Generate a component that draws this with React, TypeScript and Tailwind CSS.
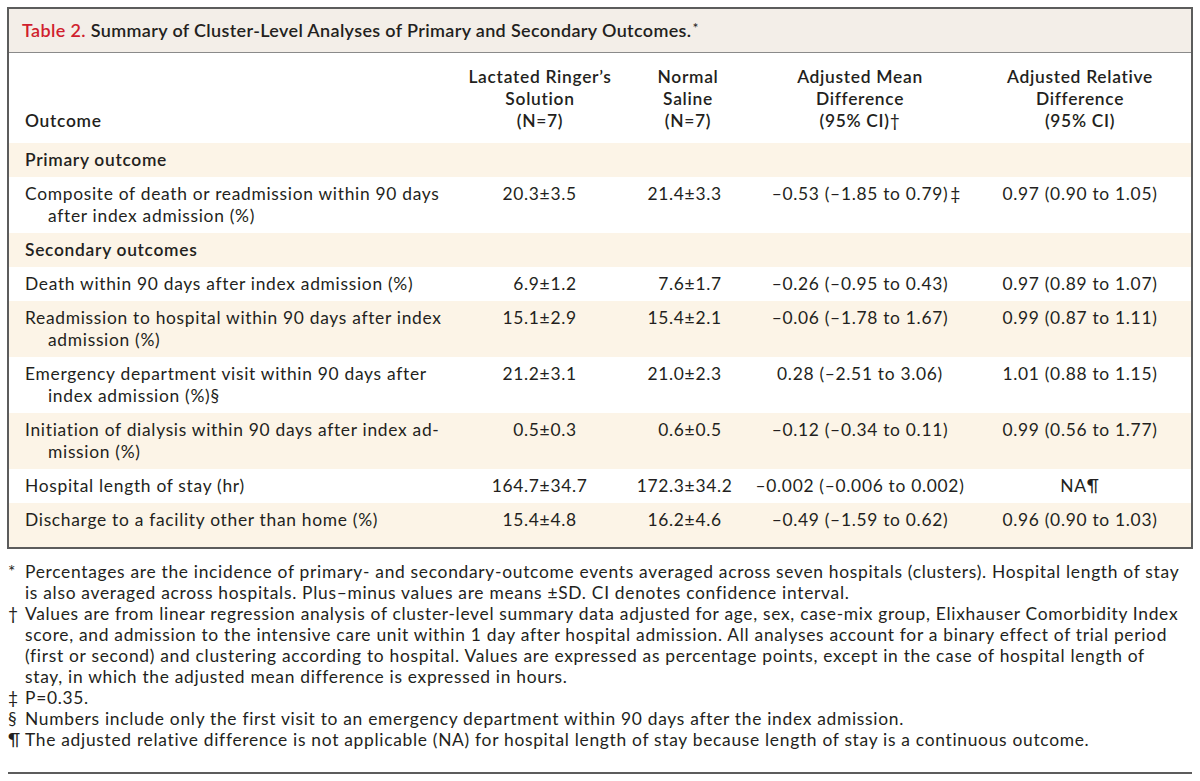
const cream = "bg-[#fcf4e7]";

type Row =
  | { kind: "section"; label: string }
  | {
      kind: "data";
      label: string[];
      lr: [string, string];
      ns: [string, string];
      amd: string;
      mark?: string;
      ard: string;
      shaded: boolean;
    };

const rows: Row[] = [
  { kind: "section", label: "Primary outcome" },
  {
    kind: "data",
    label: ["Composite of death or readmission within 90 days", "after index admission (%)"],
    lr: ["20.3", "3.5"],
    ns: ["21.4", "3.3"],
    amd: "–0.53 (–1.85 to 0.79)",
    mark: "‡",
    ard: "0.97 (0.90 to 1.05)",
    shaded: false,
  },
  { kind: "section", label: "Secondary outcomes" },
  {
    kind: "data",
    label: ["Death within 90 days after index admission (%)"],
    lr: ["6.9", "1.2"],
    ns: ["7.6", "1.7"],
    amd: "–0.26 (–0.95 to 0.43)",
    ard: "0.97 (0.89 to 1.07)",
    shaded: false,
  },
  {
    kind: "data",
    label: ["Readmission to hospital within 90 days after index", "admission (%)"],
    lr: ["15.1", "2.9"],
    ns: ["15.4", "2.1"],
    amd: "–0.06 (–1.78 to 1.67)",
    ard: "0.99 (0.87 to 1.11)",
    shaded: true,
  },
  {
    kind: "data",
    label: ["Emergency department visit within 90 days after", "index admission (%)§"],
    lr: ["21.2", "3.1"],
    ns: ["21.0", "2.3"],
    amd: "0.28 (–2.51 to 3.06)",
    ard: "1.01 (0.88 to 1.15)",
    shaded: false,
  },
  {
    kind: "data",
    label: ["Initiation of dialysis within 90 days after index ad-", "mission (%)"],
    lr: ["0.5", "0.3"],
    ns: ["0.6", "0.5"],
    amd: "–0.12 (–0.34 to 0.11)",
    ard: "0.99 (0.56 to 1.77)",
    shaded: true,
  },
  {
    kind: "data",
    label: ["Hospital length of stay (hr)"],
    lr: ["164.7", "34.7"],
    ns: ["172.3", "34.2"],
    amd: "–0.002 (–0.006 to 0.002)",
    ard: "NA¶",
    shaded: false,
  },
  {
    kind: "data",
    label: ["Discharge to a facility other than home (%)"],
    lr: ["15.4", "4.8"],
    ns: ["16.2", "4.6"],
    amd: "–0.49 (–1.59 to 0.62)",
    ard: "0.96 (0.90 to 1.03)",
    shaded: true,
  },
];

const notes = [
  {
    mark: "*",
    lines: [
      "Percentages are the incidence of primary- and secondary-outcome events averaged across seven hospitals (clusters). Hospital length of stay",
      "is also averaged across hospitals. Plus–minus values are means ±SD. CI denotes confidence interval.",
    ],
  },
  {
    mark: "†",
    lines: [
      "Values are from linear regression analysis of cluster-level summary data adjusted for age, sex, case-mix group, Elixhauser Comorbidity Index",
      "score, and admission to the intensive care unit within 1 day after hospital admission. All analyses account for a binary effect of trial period",
      "(first or second) and clustering according to hospital. Values are expressed as percentage points, except in the case of hospital length of",
      "stay, in which the adjusted mean difference is expressed in hours.",
    ],
  },
  { mark: "‡", lines: ["P=0.35."] },
  { mark: "§", lines: ["Numbers include only the first visit to an emergency department within 90 days after the index admission."] },
  {
    mark: "¶",
    lines: ["The adjusted relative difference is not applicable (NA) for hospital length of stay because length of stay is a continuous outcome."],
  },
];

const cols = "grid grid-cols-[446px_170px_126px_218px_222px]";

function PlusMinus({ v, shift }: { v: [string, string]; shift: string }) {
  return (
    <div className={`flex justify-center ${shift}`}>
      <span className="w-[56px] text-right">{v[0]}</span>
      <span>±</span>
      <span className="w-[56px] text-left">{v[1]}</span>
    </div>
  );
}

export default function App() {
  return (
    <div className="w-[1200px] h-[781px] bg-white text-[#231f20] font-['Lato',sans-serif] pt-[7px] tracking-[0.7px]">
      <div className="ml-[7px] w-[1186px] border-2 border-[#5c5c5c]">
        <div className="h-[44px] bg-[#f3eee8] border-b border-[#8a8a8a] flex items-center pl-[13px] text-[18px] font-semibold tracking-[0.35px]">
          <span className="text-[#d01f2e]">Table 2.</span>
          <span className="ml-[5px]">Summary of Cluster-Level Analyses of Primary and Secondary Outcomes.</span>
          <span className="ml-[1px] text-[14px] -mt-[6px] font-normal">*</span>
        </div>

        <div className={`${cols} items-end pt-[13px] pb-[11px] text-[17.4px] leading-[22px] font-semibold`}>
          <div className="pl-[16px]">Outcome</div>
          <div className="text-center">
            Lactated Ringer’s
            <br />
            Solution
            <br />
            (N=7)
          </div>
          <div className="text-center">
            Normal
            <br />
            Saline
            <br />
            (N=7)
          </div>
          <div className="text-center">
            Adjusted Mean
            <br />
            Difference
            <br />
            (95% CI)<span className="font-normal">†</span>
          </div>
          <div className="text-center">
            Adjusted Relative
            <br />
            Difference
            <br />
            (95% CI)
          </div>
        </div>

        {rows.map((r, i) =>
          r.kind === "section" ? (
            <div key={i} className={`${cream} h-[34px] flex items-center pl-[16px] text-[17.4px] font-semibold`}>
              {r.label}
            </div>
          ) : (
            <div
              key={i}
              className={`${cols} ${r.shaded ? cream : "bg-white"} items-start pt-[6px] ${
                i === rows.length - 1 ? "pb-[16px]" : "pb-[6px]"
              } text-[17.4px] leading-[22px]`}
            >
              <div className="pl-[16px] whitespace-nowrap">
                {r.label.map((l, j) => (
                  <div key={j} className={j > 0 ? "pl-[23px]" : ""}>
                    {l}
                  </div>
                ))}
              </div>
              <PlusMinus v={r.lr} shift="pl-[10px]" />
              <PlusMinus v={r.ns} shift="pl-[4px]" />
              <div className="flex justify-center">
                <span className="relative whitespace-nowrap">
                  {r.amd}
                  {r.mark && <span className="absolute left-full top-0 pl-[2px]">{r.mark}</span>}
                </span>
              </div>
              <div className="text-center whitespace-nowrap">{r.ard}</div>
            </div>
          ),
        )}
      </div>

      <div className="ml-[8px] w-[1184px] pt-[12px] text-[17.4px] leading-[21px]">
        {notes.map((n, i) => (
          <div key={i} className="flex">
            <span className="w-[17px] shrink-0">{n.mark}</span>
            <div className="whitespace-nowrap">
              {n.lines.map((l, j) => (
                <div key={j}>{l}</div>
              ))}
            </div>
          </div>
        ))}
        <div className="mt-[22px] h-[2px] bg-[#5c5c5c]" />
      </div>
    </div>
  );
}
